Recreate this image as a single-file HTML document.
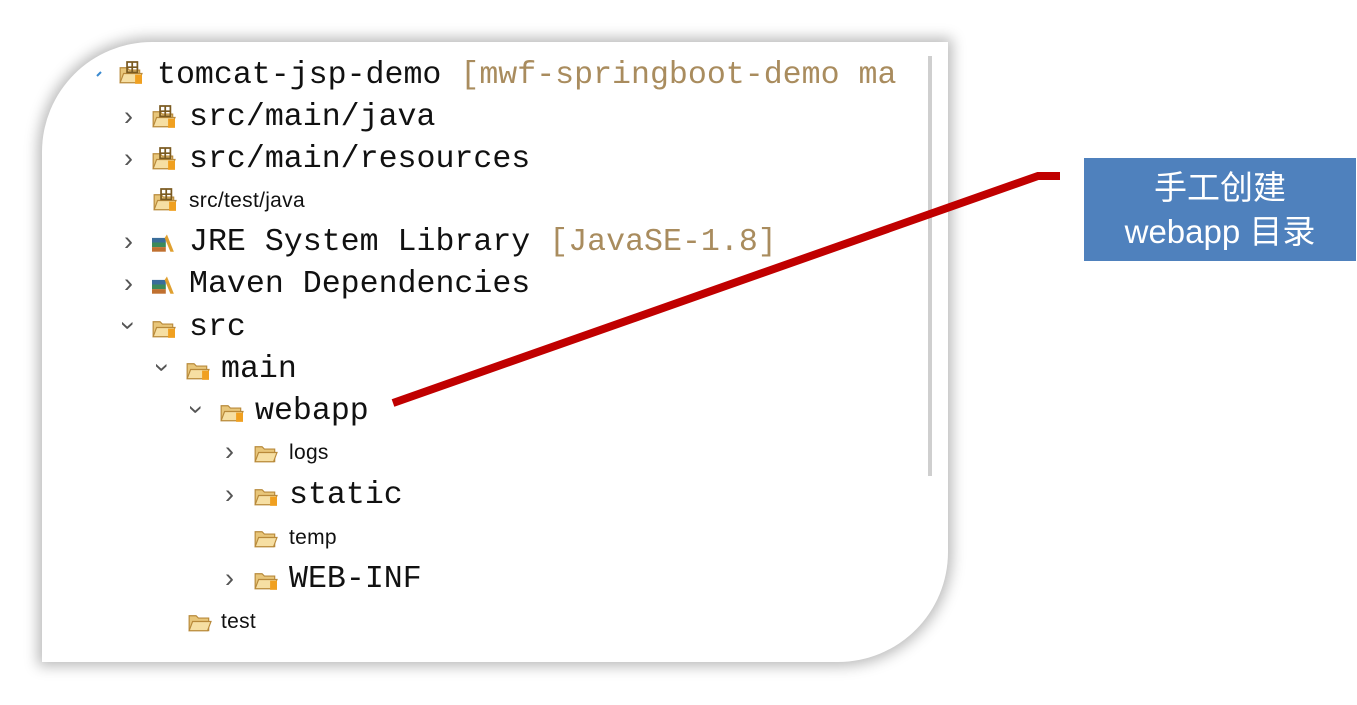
<!DOCTYPE html>
<html><head><meta charset="utf-8"><style>
body{margin:0;width:1357px;height:705px;background:#fff;position:relative;overflow:hidden;font-family:"Liberation Mono",monospace}
.panel{position:absolute;left:42px;top:42px;width:906px;height:620px;background:#fff;border-radius:110px 0 110px 0;box-shadow:0 0 14px 4px rgba(0,0,0,0.28)}
.sb{position:absolute;left:928px;top:56px;width:4px;height:420px;background:#cfcfcf}
.r{position:absolute;white-space:nowrap;color:#111;font-size:31.6px;line-height:40px}
.s{font-family:"Liberation Sans",sans-serif;font-size:21px;letter-spacing:0.3px}
.g{color:#a98c5e}
.ch{position:absolute;font-family:"Liberation Sans",sans-serif;color:#555;font-size:27px}
.call{position:absolute;left:1084px;top:158px;width:272px;height:103px;background:#4f81bd;color:#fff;text-align:center;font-family:"Liberation Sans","Noto Sans CJK SC",sans-serif;font-size:33px;line-height:44px;padding-top:8px;box-sizing:border-box}
</style></head><body>
<div class="panel"></div>
<div class="sb"></div>
<svg width="1357" height="705" style="position:absolute;left:0;top:0">
<defs>
<g id="fold"><path d="M1 5h6l2 2h9v11H1z" fill="#e8c67a" stroke="#b8893a"/><path d="M1 18l3-8h16l-3 8z" fill="#f6dfa3" stroke="#b8893a"/></g>
<g id="pk"><use href="#fold"/><rect x="7" y="0" width="9" height="9" fill="none" stroke="#7a5a20" stroke-width="1.5"/><path d="M11.5 0v9M7 4.5h9" stroke="#7a5a20" stroke-width="1.5"/><rect x="14" y="11" width="6" height="8" fill="#f0a020"/></g>
<g id="lib"><rect x="0" y="6" width="12" height="4" fill="#3a6d9a"/><rect x="0" y="10" width="12" height="4" fill="#3c8a5a"/><rect x="0" y="14" width="12" height="4" fill="#c07030"/><path d="M13 3l6 15h-3l-5-12z" fill="#e0a030"/></g>
<g id="fl"><use href="#fold"/><rect x="14" y="11" width="6" height="8" fill="#f0a020"/></g>
</defs>
<g transform="translate(119,62) scale(1.15)"><use href="#pk"/></g>
<g transform="translate(152,106) scale(1.15)"><use href="#pk"/></g>
<g transform="translate(152,148) scale(1.15)"><use href="#pk"/></g>
<g transform="translate(153,189) scale(1.15)"><use href="#pk"/></g>
<g transform="translate(152,231) scale(1.15)"><use href="#lib"/></g>
<g transform="translate(152,273) scale(1.15)"><use href="#lib"/></g>
<g transform="translate(152,316) scale(1.15)"><use href="#fl"/></g>
<g transform="translate(186,358) scale(1.15)"><use href="#fl"/></g>
<g transform="translate(220,400) scale(1.15)"><use href="#fl"/></g>
<g transform="translate(254,441) scale(1.15)"><use href="#fold"/></g>
<g transform="translate(254,484) scale(1.15)"><use href="#fl"/></g>
<g transform="translate(254,526) scale(1.15)"><use href="#fold"/></g>
<g transform="translate(254,568) scale(1.15)"><use href="#fl"/></g>
<g transform="translate(188,610) scale(1.15)"><use href="#fold"/></g>
<path d="M393 403L1038 176H1060" fill="none" stroke="#c00000" stroke-width="8"/>
<path d="M97 76l4-4" stroke="#3a8ad0" stroke-width="2"/>
</svg>
<div class="r" style="left:157px;top:56px">tomcat-jsp-demo  <span class="g">[mwf-springboot-demo ma</span></div>
<div class="ch" style="left:124px;top:101px">›</div><div class="r" style="left:189px;top:98px">src/main/java</div>
<div class="ch" style="left:124px;top:143px">›</div><div class="r" style="left:189px;top:140px">src/main/resources</div>
<div class="r s" style="left:189px;top:181px">src/test/java</div>
<div class="ch" style="left:124px;top:226px">›</div><div class="r" style="left:189px;top:223px">JRE System Library <span class="g">[JavaSE-1.8]</span></div>
<div class="ch" style="left:124px;top:268px">›</div><div class="r" style="left:189px;top:265px">Maven Dependencies</div>
<div class="ch" style="left:124px;top:310px;transform:rotate(90deg)">›</div><div class="r" style="left:189px;top:308px">src</div>
<div class="ch" style="left:158px;top:352px;transform:rotate(90deg)">›</div><div class="r" style="left:221px;top:350px">main</div>
<div class="ch" style="left:192px;top:394px;transform:rotate(90deg)">›</div><div class="r" style="left:255px;top:392px">webapp</div>
<div class="ch" style="left:225px;top:436px">›</div><div class="r s" style="left:289px;top:433px">logs</div>
<div class="ch" style="left:225px;top:479px">›</div><div class="r" style="left:289px;top:476px">static</div>
<div class="r s" style="left:289px;top:518px">temp</div>
<div class="ch" style="left:225px;top:563px">›</div><div class="r" style="left:289px;top:560px">WEB-INF</div>
<div class="r s" style="left:221px;top:602px">test</div>
<div class="call">手工创建<br>webapp 目录</div>
</body></html>
